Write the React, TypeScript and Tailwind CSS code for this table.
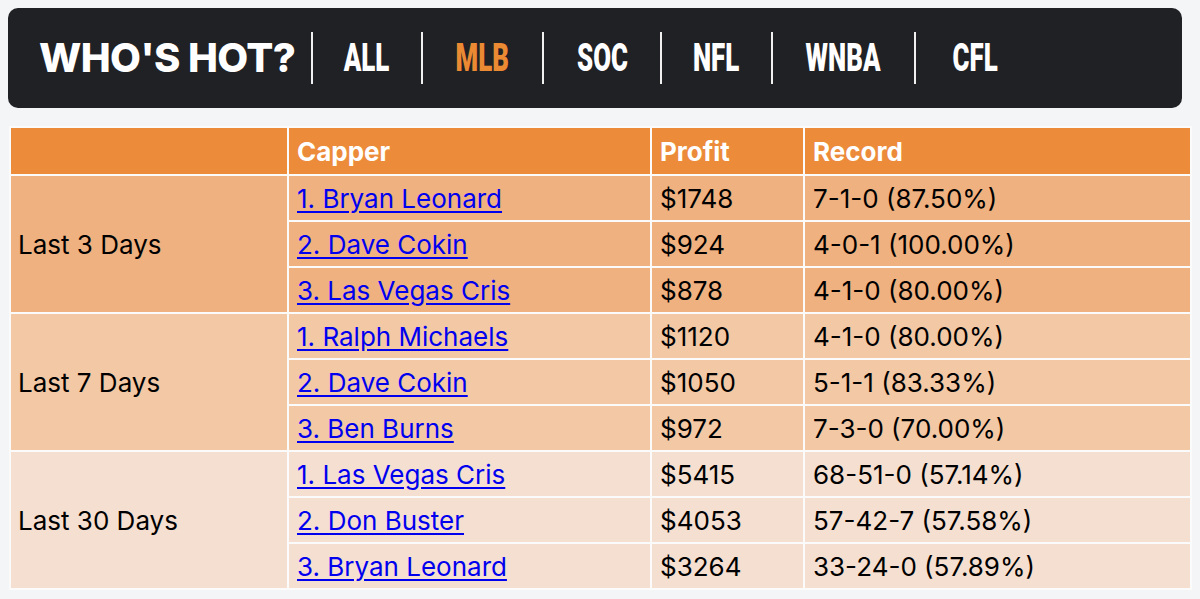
import React from 'react';

const tabs = [
  { name: 'ALL', w: 'w-[108px]' },
  { name: 'MLB', w: 'w-[119px]' },
  { name: 'SOC', w: 'w-[116px]' },
  { name: 'NFL', w: 'w-[109px]' },
  { name: 'WNBA', w: 'w-[141px]' },
  { name: 'CFL', w: 'w-[118px]' },
];

const groups = [
  {
    label: 'Last 3 Days',
    bg: 'bg-[#efb17f]',
    rows: [
      ['1. Bryan Leonard', '$1748', '7-1-0 (87.50%)'],
      ['2. Dave Cokin', '$924', '4-0-1 (100.00%)'],
      ['3. Las Vegas Cris', '$878', '4-1-0 (80.00%)'],
    ],
  },
  {
    label: 'Last 7 Days',
    bg: 'bg-[#f3c8a5]',
    rows: [
      ['1. Ralph Michaels', '$1120', '4-1-0 (80.00%)'],
      ['2. Dave Cokin', '$1050', '5-1-1 (83.33%)'],
      ['3. Ben Burns', '$972', '7-3-0 (70.00%)'],
    ],
  },
  {
    label: 'Last 30 Days',
    bg: 'bg-[#f5dfd0]',
    rows: [
      ['1. Las Vegas Cris', '$5415', '68-51-0 (57.14%)'],
      ['2. Don Buster', '$4053', '57-42-7 (57.58%)'],
      ['3. Bryan Leonard', '$3264', '33-24-0 (57.89%)'],
    ],
  },
];

const WhosHot = () => {
  return (
    <div className="min-h-screen bg-[#f4f5f7] pt-2 px-2 font-['Inter',sans-serif]">
      {/* header bar */}
      <div className="flex items-center h-[100px] w-[1174px] bg-[#202124] rounded-[10px] pl-[31px]">
        <h1 className="shrink-0 whitespace-nowrap w-[272px] text-[40px] font-extrabold tracking-[-0.6px] text-white leading-none">
          WHO'S HOT?
        </h1>
        {tabs.map((t) => (
          <div key={t.name} className="flex items-center shrink-0">
            <span className="w-[2px] h-[52px] bg-[#f0f0f0]" />
            <span className={`${t.w} flex justify-center`}>
              <span
                className={`inline-block scale-x-[0.68] text-[38px] font-black leading-none font-['Roboto',sans-serif] ${
                  t.name === 'MLB' ? 'text-[#ec8a34]' : 'text-white'
                }`}
              >
                {t.name}
              </span>
            </span>
          </div>
        ))}
      </div>

      {/* table */}
      <table className="mt-[18px] ml-[1px] border-separate border-spacing-[2px] bg-[#fbfbfb] text-[26px] text-black w-[1183px]">
        <thead>
          <tr className="bg-[#ec8b3a] text-white font-bold text-left h-[46px]">
            <th className="w-[276px]"></th>
            <th className="w-[361px] px-[8px]">Capper</th>
            <th className="w-[151px] px-[8px]">Profit</th>
            <th className="px-[8px]">Record</th>
          </tr>
        </thead>
        <tbody>
          {groups.map((g) =>
            g.rows.map((r, i) => (
              <tr key={g.label + i} className={`${g.bg} h-[44px]`}>
                {i === 0 && (
                  <td rowSpan={3} className="px-[7px] font-normal">
                    {g.label}
                  </td>
                )}
                <td className="px-[8px]">
                  <a href="#" className="text-[#0000ee] underline underline-offset-[3px]">
                    {r[0]}
                  </a>
                </td>
                <td className="px-[8px]">{r[1]}</td>
                <td className="px-[8px]">{r[2]}</td>
              </tr>
            ))
          )}
        </tbody>
      </table>
    </div>
  );
};

export default WhosHot;
